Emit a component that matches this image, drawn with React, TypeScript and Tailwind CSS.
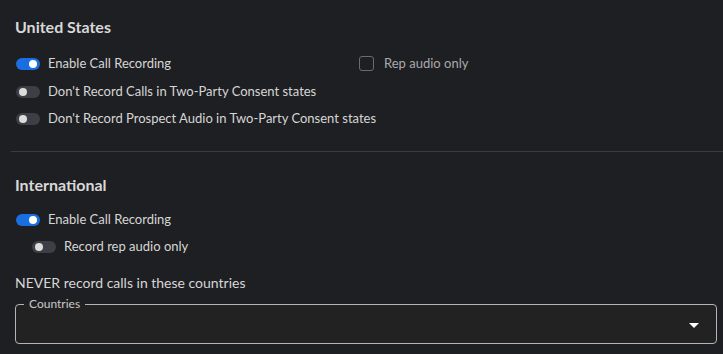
import React from "react";

function Toggle({ on }: { on: boolean }) {
  return (
    <span
      className={`relative inline-flex h-[12px] w-[24px] shrink-0 items-center rounded-full ${
        on ? "bg-[#1a6fe0]" : "bg-[#3d3f46]"
      }`}
    >
      <span
        className={`absolute h-[8px] w-[8px] rounded-full ${
          on ? "left-[13px] bg-white" : "left-[3px] bg-[#dcdcdc]"
        }`}
      />
    </span>
  );
}

function Row({ on, label, indent, className }: { on: boolean; label: string; indent?: boolean; className?: string }) {
  return (
    <div className={`flex h-[27px] items-center gap-[8px] ${indent ? "pl-[32px]" : "pl-[16px]"} ${className ?? ""}`}>
      <Toggle on={on} />
      <span className="text-[13px] text-[#d6d6d6]">{label}</span>
    </div>
  );
}

export default function App() {
  return (
    <div
      className="h-[354px] w-[723px] overflow-hidden bg-[#1e1f22] text-[#d6d6d6]"
      style={{ fontFamily: "Lato, 'Noto Sans', sans-serif" }}
    >
      <div className="pl-[15px] pt-[16px] text-[16px] font-bold leading-[22px] text-[#d8d8d8]">
        United States
      </div>
      <div className="mt-[12px] flex">
        <div className="w-[359px]">
          <Row on={true} label="Enable Call Recording" />
        </div>
        <div className="flex h-[27px] items-center gap-[10px]">
          <span className="h-[15px] w-[15px] rounded-[3px] border border-[#6a6b70]" />
          <span className="text-[13px] text-[#a9a9ad]">Rep audio only</span>
        </div>
      </div>
      <Row on={false} label="Don't Record Calls in Two-Party Consent states" className="mt-[1px]" />
      <Row on={false} label="Don't Record Prospect Audio in Two-Party Consent states" />
      <div className="ml-[11px] mt-[19px] h-px bg-[#3a3b40]" />
      <div className="pl-[15px] pt-[22px] text-[16px] font-bold leading-[22px] text-[#d8d8d8]">
        International
      </div>
      <div className="mt-[10px]">
        <Row on={true} label="Enable Call Recording" />
        <Row on={false} label="Record rep audio only" indent />
      </div>
      <div className="pl-[15px] pt-[13px] text-[14px] leading-[20px] text-[#d6d6d6]">
        NEVER record calls in these countries
      </div>
      <fieldset className="relative ml-[15px] mt-[6px] h-[45px] w-[702px] rounded-[4px] border border-[#b4b4b4] bg-[#222222] px-[8px]">
        <legend className="px-[5px] text-[12px] leading-[10px] text-[#c8c8c8]">Countries</legend>
        <svg
          className="absolute right-[17px] top-[14px]"
          width="10"
          height="6"
          viewBox="0 0 10 6"
        >
          <path d="M0 0 H10 L5 5 Z" fill="#ffffff" />
        </svg>
      </fieldset>
    </div>
  );
}
